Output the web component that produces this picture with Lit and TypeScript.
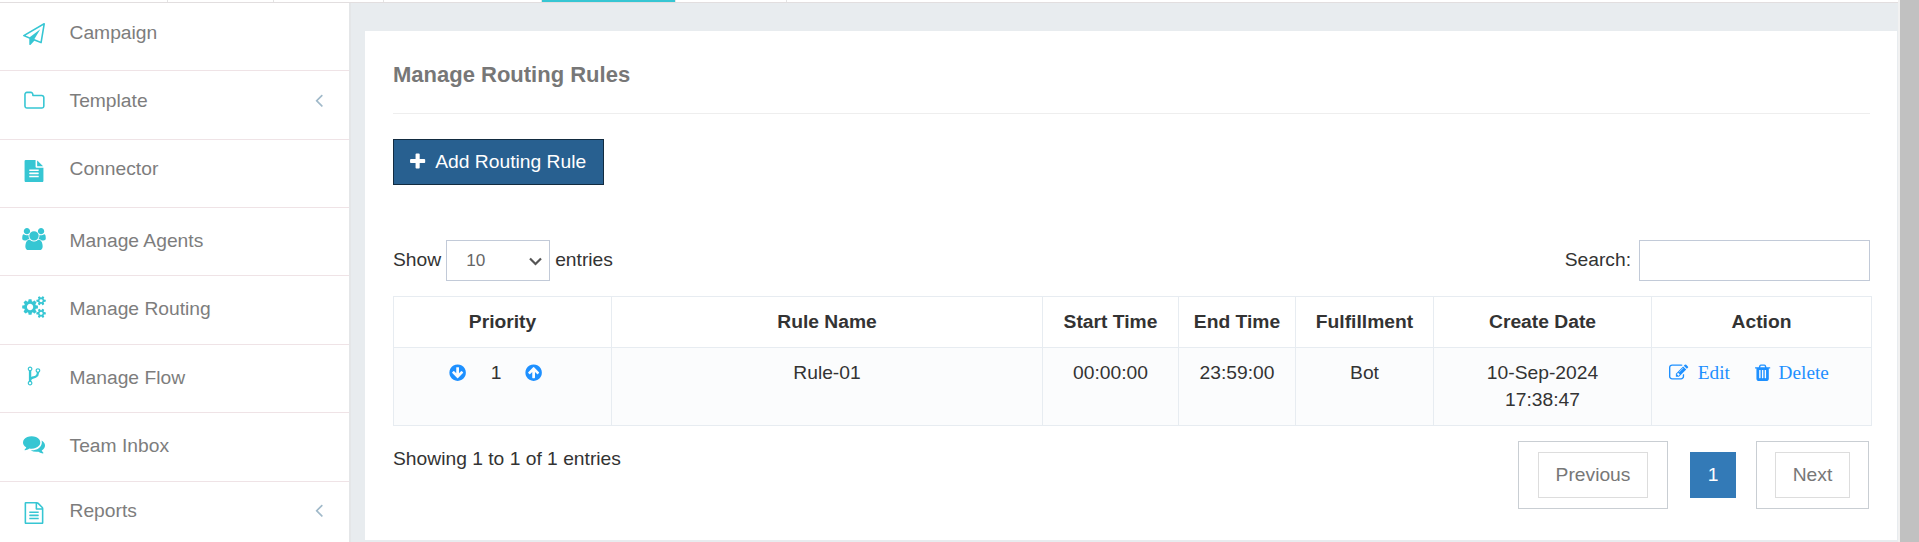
import { LitElement, html, css, svg } from "lit";
import { customElement } from "lit/decorators.js";

const ICONS: Record<string, string> = {
  planeO: "M1764 11q33 24 27 64l-256 1536q-5 29-32 45-14 8-31 8-11 0-24-5l-527-215-298 327q-18 21-47 21-14 0-23-4-19-7-30-23.5t-11-36.5v-452l-472-193q-37-14-40-55-3-39 32-59l1664-960q35-21 68 2zm-342 1499l221-1323-1434 827 336 137 863-639-478 797z",
  folder: "M1632 1312v-704q0-40-28-68t-68-28h-704q-40 0-68-28t-28-68v-64q0-40-28-68t-68-28h-320q-40 0-68 28t-28 68v960q0 40 28 68t68 28h1216q40 0 68-28t28-68zm128-704v704q0 92-66 158t-158 66h-1216q-92 0-158-66t-66-158v-960q0-92 66-158t158-66h320q92 0 158 66t66 158v32h672q92 0 158 66t66 158z",
  file: "M1596 476q14 14 28 36h-472v-472q22 14 36 28zm-476 164h544v1056q0 40-28 68t-68 28h-1344q-40 0-68-28t-28-68v-1600q0-40 28-68t68-28h800v544q0 40 28 68t68 28zm160 736v-64q0-14-9-23t-23-9h-704q-14 0-23 9t-9 23v64q0 14 9 23t23 9h704q14 0 23-9t9-23zm0-256v-64q0-14-9-23t-23-9h-704q-14 0-23 9t-9 23v64q0 14 9 23t23 9h704q14 0 23-9t9-23zm0-256v-64q0-14-9-23t-23-9h-704q-14 0-23 9t-9 23v64q0 14 9 23t23 9h704q14 0 23-9t9-23z",
  fileO: "M1596 380q28 28 48 76t20 88v1152q0 40-28 68t-68 28h-1344q-40 0-68-28t-28-68v-1600q0-40 28-68t68-28h896q40 0 88 20t76 48zm-444-244v376h376q-10-29-22-41l-313-313q-12-12-41-22zm384 1528v-1024h-416q-40 0-68-28t-28-68v-416h-768v1536h1280zm-1024-864q0-14 9-23t23-9h704q14 0 23 9t9 23v64q0 14-9 23t-23 9h-704q-14 0-23-9t-9-23v-64zm736 224q14 0 23 9t9 23v64q0 14-9 23t-23 9h-704q-14 0-23-9t-9-23v-64q0-14 9-23t23-9h704zm0 256q14 0 23 9t9 23v64q0 14-9 23t-23 9h-704q-14 0-23-9t-9-23v-64q0-14 9-23t23-9h704z",
  users: "M529 896q-162 5-265 128h-134q-82 0-138-40.5t-56-118.5q0-353 124-353 6 0 43.5 21t97.5 42.5 119 21.5q67 0 133-23-5 37-5 66 0 139 81 256zm1071 637q0 120-73 189.5t-194 69.5h-874q-121 0-194-69.5t-73-189.5q0-53 3.5-103.5t14-109 26.5-108.5 43-97.5 62-81 85.5-53.5 111.5-20q10 0 43 21.5t73 48 107 48 135 21.5 135-21.5 107-48 73-48 43-21.5q61 0 111.5 20t85.5 53.5 62 81 43 97.5 26.5 108.5 14 109 3.5 103.5zm-1024-1277q0 106-75 181t-181 75-181-75-75-181 75-181 181-75 181 75 75 181zm704 384q0 159-112.5 271.5t-271.5 112.5-271.5-112.5-112.5-271.5 112.5-271.5 271.5-112.5 271.5 112.5 112.5 271.5zm576 225q0 78-56 118.5t-138 40.5h-134q-103-123-265-128 81-117 81-256 0-29-5-66 66 23 133 23 59 0 119-21.5t97.5-42.5 43.5-21q124 0 124 353zm-128-609q0 106-75 181t-181 75-181-75-75-181 75-181 181-75 181 75 75 181z",
  cogs: "M832 896q0-106-75-181t-181-75-181 75-75 181 75 181 181 75 181-75 75-181zm768 512q0-52-38-90t-90-38-90 38-38 90q0 53 37.5 90.5t90.5 37.5 90.5-37.5 37.5-90.5zm0-1024q0-52-38-90t-90-38-90 38-38 90q0 53 37.5 90.5t90.5 37.5 90.5-37.5 37.5-90.5zm-384 421v185q0 10-7 19.5t-16 10.5l-155 24q-11 35-32 76 34 48 90 115 7 11 7 20 0 12-7 19-23 30-82.5 89.5t-78.5 59.5q-11 0-21-7l-115-90q-37 19-77 31-11 108-23 155-7 24-30 24h-186q-11 0-20-7.5t-10-17.5l-23-153q-34-10-75-31l-118 89q-7 7-20 7-11 0-21-8-144-133-144-160 0-9 7-19 10-14 41-53t47-61q-23-44-35-82l-152-24q-10-1-17-9.5t-7-19.5v-185q0-10 7-19.5t16-10.5l155-24q11-35 32-76-34-48-90-115-7-11-7-20 0-12 7-20 22-30 82-89t79-59q11 0 21 7l115 90q34-18 77-32 11-108 23-154 7-24 30-24h186q11 0 20 7.5t10 17.5l23 153q34 10 75 31l118-89q8-7 20-7 11 0 21 8 144 133 144 160 0 8-7 19-12 16-42 54t-45 60q23 48 34 82l152 23q10 2 17 10.5t7 19.5zm640 533v140q0 16-149 31-12 27-30 52 51 113 51 138 0 4-4 7-122 71-124 71-8 0-46-47t-52-68q-20 2-30 2t-30-2q-14 21-52 68t-46 47q-2 0-124-71-4-3-4-7 0-25 51-138-18-25-30-52-149-15-149-31v-140q0-16 149-31 13-29 30-52-51-113-51-138 0-4 4-7 4-2 35-20t59-34 30-16q8 0 46 46.5t52 67.5q20-2 30-2t30 2q51-71 92-112l6-2q4 0 124 70 4 3 4 7 0 25-51 138 17 23 30 52 149 15 149 31zm0-1024v140q0 16-149 31-12 27-30 52 51 113 51 138 0 4-4 7-122 71-124 71-8 0-46-47t-52-68q-20 2-30 2t-30-2q-14 21-52 68t-46 47q-2 0-124-71-4-3-4-7 0-25 51-138-18-25-30-52-149-15-149-31v-140q0-16 149-31 13-29 30-52-51-113-51-138 0-4 4-7 4-2 35-20t59-34 30-16q8 0 46 46.5t52 67.5q20-2 30-2t30 2q51-71 92-112l6-2q4 0 124 70 4 3 4 7 0 25-51 138 17 23 30 52 149 15 149 31z",
  fork: "M672 1472q0-40-28-68t-68-28-68 28-28 68 28 68 68 28 68-28 28-68zm0-1152q0-40-28-68t-68-28-68 28-28 68 28 68 68 28 68-28 28-68zm640 128q0-40-28-68t-68-28-68 28-28 68 28 68 68 28 68-28 28-68zm96 0q0 52-26 96.5t-70 69.5q-2 287-226 414-67 38-203 81-128 40-169.5 71t-41.5 100v26q44 25 70 69.5t26 96.5q0 80-56 136t-136 56-136-56-56-136q0-52 26-96.5t70-69.5v-820q-44-25-70-69.5t-26-96.5q0-80 56-136t136-56 136 56 56 136q0 52-26 96.5t-70 69.5v497q54-26 154-57 55-17 87.5-29.5t70.5-31 59-39.5 40.5-51 28-69.5 8.5-91.5q-44-25-70-69.5t-26-96.5q0-80 56-136t136-56 136 56 56 136z",
  comments: "M1408 768q0 139-94 257t-256.5 186.5-353.5 68.5q-86 0-176-16-124 88-278 128-36 9-86 16h-3q-11 0-20.5-8t-11.5-21q-1-3-1-6.5t.5-6.5 2-6l2.5-5 3.5-5.5 4-5 4.5-5 4-4.5q5-6 23-25t26-29.5 22.5-29 25-38.5 20.5-44q-124-72-195-177t-71-224q0-139 94-257t256.5-186.5 353.5-68.5 353.5 68.5 256.5 186.5 94 257zm384 256q0 120-71 224.5t-195 176.5q10 24 20.5 44t25 38.5 22.5 29 26 29.5 23 25q1 1 4 4.5t4.5 5 4 5 3.5 5.5l2.5 5 2 6 .5 6.5-1 6.5q-3 14-13 22t-22 7q-50-7-86-16-154-40-278-128-90 16-176 16-271 0-472-132 58 4 88 4 161 0 309-45t264-129q125-92 192-212t67-254q0-77-23-152 129 71 204 178t75 230z",
  left: "M1203 544q0 13-10 23l-393 393 393 393q10 10 10 23t-10 23l-50 50q-10 10-23 10t-23-10l-466-466q-10-10-10-23t10-23l466-466q10-10 23-10t23 10l50 50q10 10 10 23z",
  plus: "M1600 736v192q0 40-28 68t-68 28h-416v416q0 40-28 68t-68 28h-192q-40 0-68-28t-28-68v-416h-416q-40 0-68-28t-28-68v-192q0-40 28-68t68-28h416v-416q0-40 28-68t68-28h192q40 0 68 28t28 68v416h416q40 0 68 28t28 68z",
  down: "M1412 897q0-27-18-45l-91-91q-18-18-45-18t-45 18l-189 189v-502q0-26-19-45t-45-19h-128q-26 0-45 19t-19 45v502l-189-189q-19-19-45-19t-45 19l-91 91q-18 18-18 45t18 45l362 362 91 91q18 18 45 18t45-18l91-91 362-362q18-18 18-45zm252-1q0 209-103 385.5t-279.5 279.5-385.5 103-385.5-103-279.5-279.5-103-385.5 103-385.5 279.5-279.5 385.5-103 385.5 103 279.5 279.5 103 385.5z",
  edit: "M888 1184l116-116-152-152-116 116v56h96v96h56zm440-720q-16-16-33 1l-350 350q-17 17-1 33t33-1l350-350q17-17 1-33zm80 594v190q0 119-84.5 203.5t-203.5 84.5h-832q-119 0-203.5-84.5t-84.5-203.5v-832q0-119 84.5-203.5t203.5-84.5h832q63 0 117 25 15 7 18 23 3 17-9 29l-49 49q-14 14-32 8-23-6-45-6h-832q-66 0-113 47t-47 113v832q0 66 47 113t113 47h832q66 0 113-47t47-113v-126q0-13 9-22l64-64q15-15 35-7t20 29zm-96-738l288 288-672 672h-288v-288zm444 132l-92 92-288-288 92-92q28-28 68-28t68 28l152 152q28 28 28 68t-28 68z",
  trash: "M704 1376v-704q0-14-9-23t-23-9h-64q-14 0-23 9t-9 23v704q0 14 9 23t23 9h64q14 0 23-9t9-23zm256 0v-704q0-14-9-23t-23-9h-64q-14 0-23 9t-9 23v704q0 14 9 23t23 9h64q14 0 23-9t9-23zm256 0v-704q0-14-9-23t-23-9h-64q-14 0-23 9t-9 23v704q0 14 9 23t23 9h64q14 0 23-9t9-23zm-544-992h448l-48-117q-7-9-17-11h-317q-10 2-17 11zm928 32v64q0 14-9 23t-23 9h-96v948q0 83-47 143.5t-113 60.5h-832q-66 0-113-58.5t-47-141.5v-952h-96q-14 0-23-9t-9-23v-64q0-14 9-23t23-9h309l70-167q15-37 54-63t79-26h320q40 0 79 26t54 63l70 167h309q14 0 23 9t9 23z",
};

const icon = (name: string, cls = "") =>
  html`<svg class="icon ${cls}" viewBox="0 0 1792 1792" aria-hidden="true">${svg`<path d=${ICONS[name]}></path>`}</svg>`;

interface NavItem {
  label: string;
  icon: string;
  height: number;
  iconTop: number;
  textTop: number;
  submenu?: boolean;
}

const NAV: NavItem[] = [
  { label: "Campaign", icon: "planeO", height: 68, iconTop: 20, textTop: 16 },
  { label: "Template", icon: "folder", height: 69, iconTop: 19, textTop: 16, submenu: true },
  { label: "Connector", icon: "file", height: 68, iconTop: 20, textTop: 15 },
  { label: "Manage Agents", icon: "users", height: 68, iconTop: 20, textTop: 19 },
  { label: "Manage Routing", icon: "cogs", height: 69, iconTop: 20, textTop: 19 },
  { label: "Manage Flow", icon: "fork", height: 68, iconTop: 20, textTop: 19 },
  { label: "Team Inbox", icon: "comments", height: 69, iconTop: 20, textTop: 19 },
  { label: "Reports", icon: "fileO", height: 60, iconTop: 20, textTop: 15, submenu: true },
];

@customElement("app-root")
export class AppRoot extends LitElement {
  static styles = css`
    :host {
      display: flex;
      width: 100%;
      height: 542px;
      overflow: hidden;
      background: #e8ecef;
      font: 19.25px/27px "Liberation Sans", Arial, sans-serif;
      color: #333;
    }
    * { box-sizing: border-box; }
    .icon { display: block; width: 19.25px; height: 19.25px; fill: currentColor; overflow: visible; flex: none; }
    .page { flex: 1; min-width: 0; display: flex; flex-direction: column; }
    .tabs { display: flex; height: 3px; flex: none; background: #fff; border-bottom: 1px solid #e2dedf; }
    .tab { border-right: 1px solid #e4e4e4; }
    .t1 { width: 168px; }
    .t2 { width: 106px; }
    .t3 { width: 110px; }
    .t4 { width: 158px; }
    .t5 { width: 133px; background: #36c6d3; border: 0; }
    .t6 { width: 1px; }
    .t7 { width: 111px; }
    .body { display: flex; flex: 1; min-height: 0; }
    .side { width: 351px; flex: none; background: #fff; border-right: 2px solid #e4e6e8; overflow: hidden; }
    .item { display: flex; align-items: flex-start; border-bottom: 1px solid #efe3e6; padding-left: 23px; color: #7d7d7d; }
    .item:last-child { border-bottom: 0; }
    .item .nav { width: 22px; height: 22px; color: #36c6d3; margin-right: 24.5px; }
    .item .arrow { color: #a0b9c9; margin: 2px 19px 0 auto; }
    .item .arrow .icon { width: 22px; height: 22px; }
    .main { flex: 1; min-width: 0; padding: 28px 1px 2px 14px; }
    .panel { background: #fff; height: 509px; padding: 0 27px 0 28px; }
    h1 { margin: 0; height: 83px; padding-top: 30px; font-size: 22px; line-height: 27px; color: #777; border-bottom: 1px solid #eee; }
    .add { display: flex; align-items: center; margin-top: 25px; width: 211px; height: 46px; padding: 0 0 1px 14px; background: #286090; border: 1px solid #122b40; color: #fff; font: inherit; white-space: nowrap; }
    .add .icon { margin-right: 8px; }
    .tools { display: flex; margin-top: 55px; height: 41px; line-height: 39px; }
    .select { display: flex; justify-content: space-between; align-items: center; margin: 0 5px; width: 104px; border: 1px solid #c2cad8; padding: 0 7px 0 19px; font-size: 17.2px; color: #666; }
    .select svg { width: 13px; height: 9px; fill: none; stroke: #555; stroke-width: 2.2; margin-top: 1px; }
    .search { margin-left: auto; margin-right: 8px; }
    .input { width: 231px; height: 41px; border: 1px solid #c2cad8; background: #fff; padding: 0; outline: none; }
    table { margin-top: 15px; width: 1479px; border-collapse: collapse; table-layout: fixed; }
    th, td { border: 1px solid #e7ecf1; text-align: center; vertical-align: top; padding: 11px 0 0; }
    th { height: 51px; }
    td { height: 78px; background: #fbfcfd; }
    .c1 { width: 218px; } .c2 { width: 431px; } .c3 { width: 136px; } .c4 { width: 117px; }
    .c5 { width: 138px; } .c6 { width: 218px; } .c7 { width: 220px; }
    .prio { display: flex; align-items: center; padding-left: 54px; color: #1e90ff; }
    .num { color: #333; margin: 0 23px 0 23.5px; }
    .up { transform: rotate(180deg); }
    .acts { display: flex; align-items: center; padding-left: 17px; color: #1e90ff; font-family: "Liberation Serif", "Times New Roman", serif; }
    .edit { margin-right: 9.5px; }
    .del { margin: 0 6.5px 0 23px; }
    .foot { display: flex; justify-content: space-between; }
    .info { margin-top: 19px; }
    .pager { display: flex; align-items: center; margin-top: 15px; margin-right: 1px; height: 68px; color: #777; }
    .outer { border: 1px solid #c9ced3; width: 150px; height: 68px; padding: 10px 19px; }
    .next { width: 113px; padding: 10px 18px; }
    .inner { border: 1px solid #ddd; height: 46px; text-align: center; line-height: 44px; }
    .current { margin: 0 20px 0 22px; width: 46px; height: 46px; background: #337ab7; color: #fff; text-align: center; line-height: 46px; }
    .scroll { width: 21px; flex: none; background: #c1c1c1; border-left: 2px solid #f1f1f1; }
  `;

  render() {
    return html`
      <div class="page">
        <div class="tabs">${[1, 2, 3, 4, 5, 6, 7].map((n) => html`<div class="tab t${n}"></div>`)}</div>
        <div class="body">
          <nav class="side">
            ${NAV.map(
              (n) => html`<div class="item" style="height:${n.height}px">
                <div style="padding-top:${n.iconTop}px">${icon(n.icon, "nav")}</div>
                <span style="padding-top:${n.textTop}px">${n.label}</span>
                ${n.submenu ? html`<div class="arrow" style="padding-top:${n.textTop}px">${icon("left")}</div>` : ""}
              </div>`,
            )}
          </nav>
          <main class="main">
            <section class="panel">
              <h1>Manage Routing Rules</h1>
              <button class="add">${icon("plus")}<span>Add Routing Rule</span></button>
              <div class="tools">
                <span>Show</span>
                <div class="select"><span>10</span><svg viewBox="0 0 13 9"><path d="M1 1.5l5.5 5.5L12 1.5"></path></svg></div>
                <span>entries</span>
                <span class="search">Search:</span>
                <input class="input" aria-label="Search" />
              </div>
              <table>
                <thead>
                  <tr>
                    ${["Priority", "Rule Name", "Start Time", "End Time", "Fulfillment", "Create Date", "Action"].map(
                      (h, i) => html`<th class="c${i + 1}">${h}</th>`,
                    )}
                  </tr>
                </thead>
                <tbody>
                  <tr>
                    <td><div class="prio">${icon("down")}<span class="num">1</span>${icon("down", "up")}</div></td>
                    <td>Rule-01</td>
                    <td>00:00:00</td>
                    <td>23:59:00</td>
                    <td>Bot</td>
                    <td>10-Sep-2024<br />17:38:47</td>
                    <td><div class="acts">${icon("edit", "edit")}<span>Edit</span>${icon("trash", "del")}<span>Delete</span></div></td>
                  </tr>
                </tbody>
              </table>
              <div class="foot">
                <div class="info">Showing 1 to 1 of 1 entries</div>
                <div class="pager">
                  <div class="outer"><div class="inner">Previous</div></div>
                  <div class="current">1</div>
                  <div class="outer next"><div class="inner">Next</div></div>
                </div>
              </div>
            </section>
          </main>
        </div>
      </div>
      <div class="scroll"></div>
    `;
  }
}
